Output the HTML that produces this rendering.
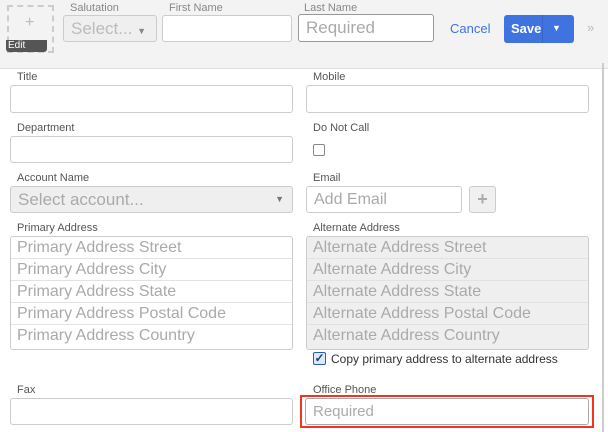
<!DOCTYPE html>
<html><head><style>
*{box-sizing:border-box;margin:0;padding:0}
body{width:608px;height:432px;overflow:hidden;background:#fff;font-family:"Liberation Sans",Arial,sans-serif;position:relative}
.a{position:absolute}
.lbl{position:absolute;font-size:11px;color:#555}
.inp{position:absolute;border:1px solid #ccc;border-radius:3px;background:#fff}
.ph{color:#aaa;font-size:17px;padding-left:7px}
.row{height:22px;line-height:21px;border-bottom:1px solid #e2e2e2;color:#aaa;font-size:16px;padding-left:6px}
.row:last-child{border-bottom:none}
</style></head><body>
<div class="a" style="left:0;top:0;width:608px;height:69px;background:#f3f3f3;border-bottom:1px solid #ddd"></div>
<div class="a" style="left:7px;top:5px;width:47px;height:48px;border:2px dashed #ccc"></div>
<div class="a" style="left:25px;top:14px;color:#bbb;font-size:16px">+</div>
<div class="a" style="left:6px;top:40px;width:41px;height:12px;background:#555;border-radius:0 0 3px 3px;color:#fff;font-size:10px;padding-left:2px;line-height:12px">Edit</div>
<div class="lbl" style="left:70px;top:2px;color:#888">Salutation</div>
<div class="lbl" style="left:169px;top:2px;color:#888">First Name</div>
<div class="lbl" style="left:304px;top:2px;color:#888">Last Name</div>
<div class="inp" style="left:63px;top:15px;width:94px;height:27px;background:#efefef;color:#bbb;font-size:17px;line-height:25px;padding-left:7px">Select... <span style="font-size:9px;color:#888">▼</span></div>
<div class="inp" style="left:162px;top:15px;width:130px;height:27px"></div>
<div class="inp" style="left:298px;top:14px;width:136px;height:28px;border-color:#999;line-height:26px"><span class="ph">Required</span></div>
<div class="a" style="left:450px;top:21px;color:#3f74e0;font-size:13px">Cancel</div>
<div class="a" style="left:504px;top:15px;width:70px;height:28px;background:#3f74e0;border-radius:3px;color:#fff;font-size:13px;font-weight:bold;line-height:28px;padding-left:7px">Save</div>
<div class="a" style="left:542px;top:15px;width:1px;height:28px;background:#3565c8"></div>
<div class="a" style="left:552px;top:23px;color:#fff;font-size:9px">▼</div>
<div class="a" style="left:587px;top:20px;color:#bbb;font-size:13px">»</div>
<div class="a" style="left:602px;top:63px;width:2px;height:369px;background:#ccc"></div>

<div class="lbl" style="left:17px;top:71px">Title</div>
<div class="lbl" style="left:313px;top:71px">Mobile</div>
<div class="inp" style="left:10px;top:85px;width:283px;height:28px"></div>
<div class="inp" style="left:306px;top:85px;width:283px;height:28px"></div>
<div class="lbl" style="left:17px;top:122px">Department</div>
<div class="lbl" style="left:313px;top:122px">Do Not Call</div>
<div class="inp" style="left:10px;top:136px;width:283px;height:27px"></div>
<div class="inp" style="left:313px;top:144px;width:12px;height:12px;border-color:#888;border-radius:2px"></div>
<div class="lbl" style="left:17px;top:172px">Account Name</div>
<div class="lbl" style="left:313px;top:172px">Email</div>
<div class="inp" style="left:10px;top:186px;width:283px;height:27px;background:#efefef;line-height:25px"><span class="ph">Select account...</span><span class="a" style="right:8px;top:0;font-size:9px;color:#777">▼</span></div>
<div class="inp" style="left:306px;top:186px;width:156px;height:27px;line-height:25px"><span class="ph" style="font-size:16px">Add Email</span></div>
<div class="inp" style="left:469px;top:186px;width:27px;height:27px;background:#f0f0f0;color:#aaa;font-size:18px;text-align:center;line-height:24px;font-weight:bold">+</div>
<div class="lbl" style="left:17px;top:222px">Primary Address</div>
<div class="lbl" style="left:313px;top:222px">Alternate Address</div>
<div class="inp" style="left:10px;top:236px;width:283px;height:114px">
<div class="row">Primary Address Street</div><div class="row">Primary Address City</div><div class="row">Primary Address State</div><div class="row">Primary Address Postal Code</div><div class="row">Primary Address Country</div></div>
<div class="inp" style="left:306px;top:236px;width:283px;height:114px;background:#efefef">
<div class="row">Alternate Address Street</div><div class="row">Alternate Address City</div><div class="row">Alternate Address State</div><div class="row">Alternate Address Postal Code</div><div class="row">Alternate Address Country</div></div>
<div class="a" style="left:313px;top:352px;width:13px;height:13px;border:1px solid #2a5db0;border-radius:2px;background:#dde8f8;color:#1a3f80;font-size:12px;line-height:11px;text-align:center;font-weight:bold">✓</div>
<div class="a" style="left:331px;top:352px;font-size:12px;color:#333">Copy primary address to alternate address</div>
<div class="lbl" style="left:17px;top:384px">Fax</div>
<div class="lbl" style="left:313px;top:384px">Office Phone</div>
<div class="inp" style="left:10px;top:398px;width:283px;height:27px"></div>
<div class="a" style="left:300px;top:395px;width:294px;height:33px;border:2px solid #f0351c"></div>
<div class="inp" style="left:305px;top:398px;width:284px;height:27px;border-color:#aaa;line-height:25px"><span class="ph" style="font-size:15px">Required</span></div>
</body></html>
